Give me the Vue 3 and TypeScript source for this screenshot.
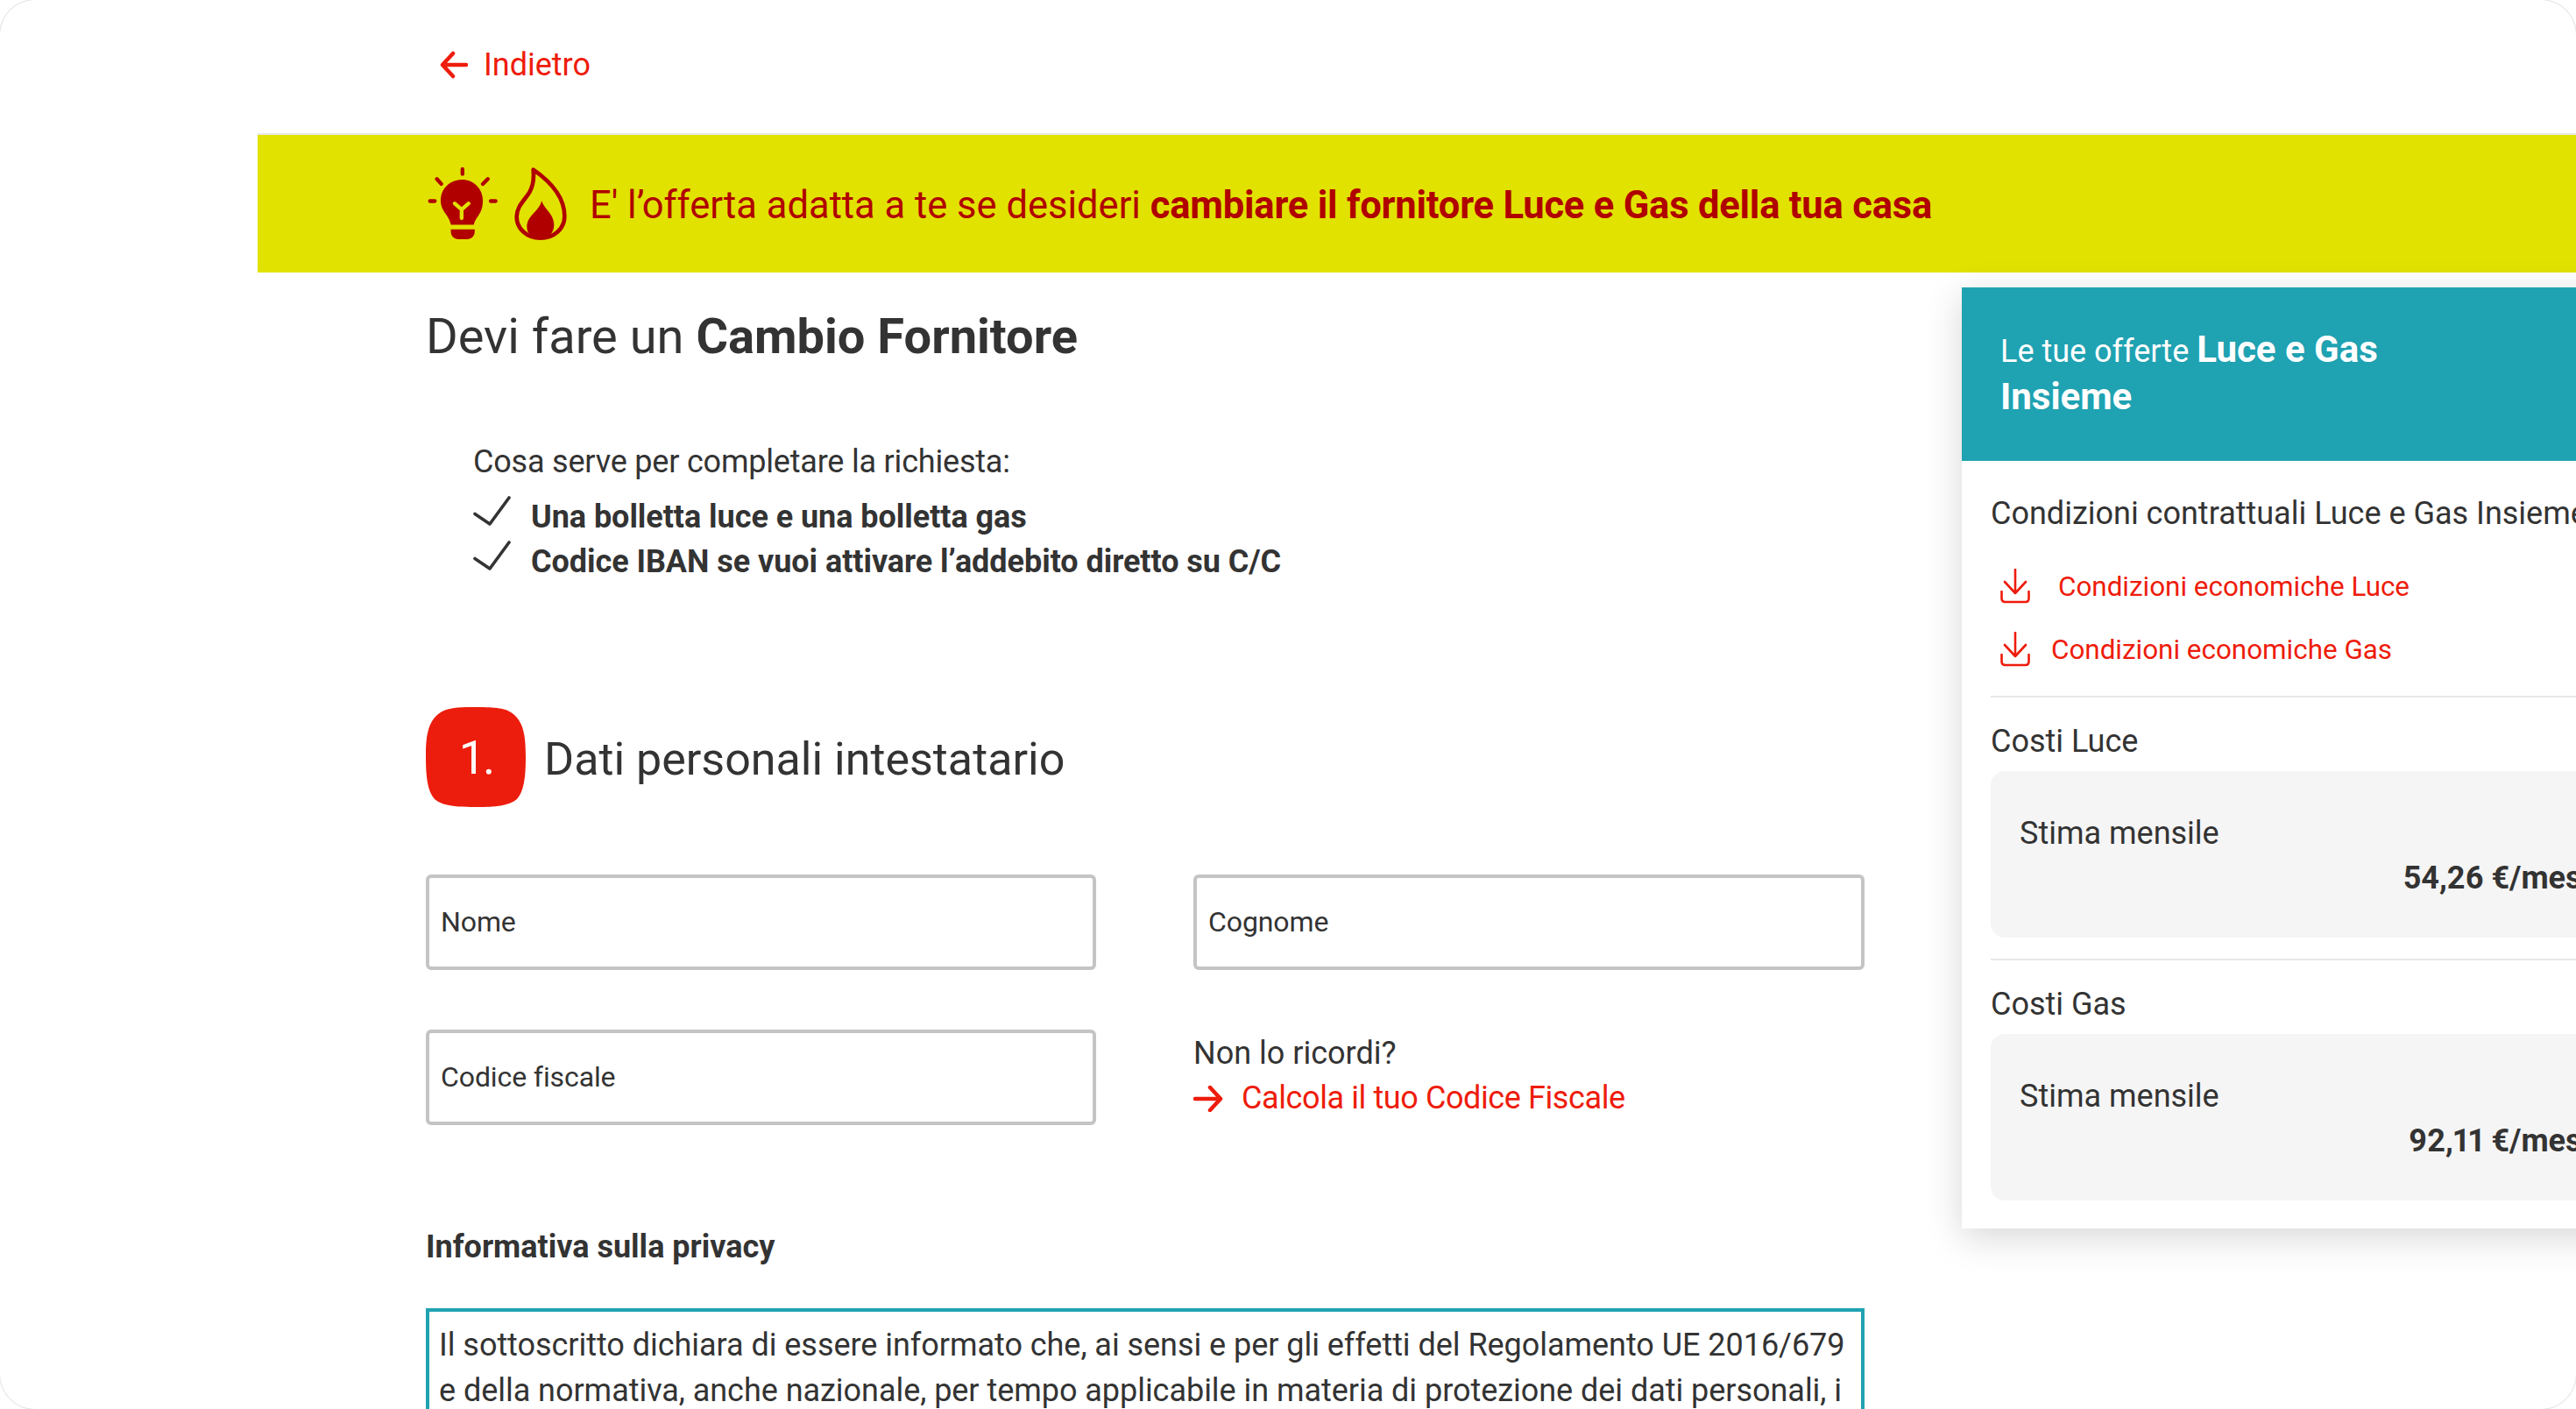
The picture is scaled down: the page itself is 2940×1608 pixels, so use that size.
<script setup lang="ts">
interface CostBlock {
  title: string
  price: string
}

const requirements: string[] = [
  'Una bolletta luce e una bolletta gas',
  "Codice IBAN se vuoi attivare l’addebito diretto su C/C"
]

const privacyLines: string[] = [
  'Il sottoscritto dichiara di essere informato che, ai sensi e per gli effetti del Regolamento UE 2016/679',
  'e della normativa, anche nazionale, per tempo applicabile in materia di protezione dei dati personali, i'
]

const costs: CostBlock[] = [
  { title: 'Costi Luce', price: '54,26 €/mese' },
  { title: 'Costi Gas', price: '92,11 €/mese' }
]
</script>

<template>
  <div class="page">
    <nav class="topbar">
      <a class="back-link">
        <svg class="back-icon" viewBox="0 0 32 32" fill="none" stroke="currentColor" stroke-width="4.5" stroke-linecap="round" stroke-linejoin="round">
          <path d="M30 16H3M15 3 3 16l12 13" />
        </svg>
        Indietro
      </a>
    </nav>

    <div class="content">
      <div class="banner">
        <svg class="bulb" viewBox="50 60 250 260">
          <g stroke="#b00000" stroke-width="13" stroke-linecap="round">
            <path d="M173 71v17M85 105l15 17M260 105l-17 17M61 181h17M270 181h17" />
          </g>
          <path fill="#b00000" d="M171 107c-41 0-73 32-73 72 0 24 12 39 22 53 6 9 11 19 13 30h79c2-11 8-21 15-30 10-14 16-29 16-53 0-40-31-72-72-72zM133 278h82v8c0 15-11 26-26 26h-30c-15 0-26-11-26-26z" />
          <path fill="none" stroke="#e2e200" stroke-width="13" stroke-linecap="round" stroke-linejoin="round" d="m146 189 24 21 24-21M170 210v30" />
        </svg>
        <svg class="flame" viewBox="340 60 195 258">
          <path fill="none" stroke="#b00000" stroke-width="14" stroke-linejoin="round" d="M411 71c3 32 1 53-13 77-16 27-44 48-44 84 0 42 36 73 81 73 46 0 83-31 83-75 0-64-48-118-107-159z" />
          <path fill="#b00000" d="M440 177c6 28 42 44 42 83 0 30-22 45-47 45-27 0-46-10-46-40 0-38 41-49 51-88z" />
        </svg>
        <p class="banner-text">E' l’offerta adatta a te se desideri <b>cambiare il fornitore Luce e Gas della tua casa</b></p>
      </div>

      <div class="columns">
        <main class="main-col">
          <h1 class="title">Devi fare un <b>Cambio Fornitore</b></h1>

          <section class="needs">
            <p class="needs-intro">Cosa serve per completare la richiesta:</p>
            <ul class="needs-list">
              <li v-for="item in requirements" :key="item" class="needs-item">
                <svg class="check" viewBox="0 0 43 34" fill="none" stroke="#333" stroke-width="3.6" stroke-linecap="round" stroke-linejoin="round">
                  <path d="M2 20.500 19 32 41 2" />
                </svg>
                <span>{{ item }}</span>
              </li>
            </ul>
          </section>

          <div class="step-head">
            <div class="step-badge">1.</div>
            <h2 class="step-title">Dati personali intestatario</h2>
          </div>

          <div class="form-grid">
            <input class="field" type="text" placeholder="Nome" />
            <input class="field" type="text" placeholder="Cognome" />
            <input class="field" type="text" placeholder="Codice fiscale" />
            <div class="cf-help">
              <span>Non lo ricordi?</span>
              <a class="cf-link">
                <svg class="cf-arrow" viewBox="0 0 34 30" fill="none" stroke="currentColor" stroke-width="4.5" stroke-linecap="round" stroke-linejoin="round">
                  <path d="M2 15h29M19 2l12 13-12 13" />
                </svg>
                Calcola il tuo Codice Fiscale
              </a>
            </div>
          </div>

          <h3 class="privacy-title">Informativa sulla privacy</h3>
          <div class="privacy-box">
            <p v-for="line in privacyLines" :key="line" class="privacy-line">{{ line }}</p>
          </div>
        </main>

        <aside class="offer-panel">
          <header class="offer-head">Le tue offerte <b>Luce e Gas<br />Insieme</b></header>
          <div class="offer-body">
            <p class="offer-label">Condizioni contrattuali Luce e Gas Insieme</p>
            <a class="doc-link first">
              <svg class="doc-icon" viewBox="0 0 34 40" fill="none" stroke="currentColor" stroke-width="2.600" stroke-linecap="round" stroke-linejoin="round">
                <path d="M17 1v27M5 15l12 13 12-13M1.500 26v8q0 4 4 4h23q4 0 4-4v-8" />
              </svg>
              <span>Condizioni economiche Luce</span>
            </a>
            <a class="doc-link second">
              <svg class="doc-icon" viewBox="0 0 34 40" fill="none" stroke="currentColor" stroke-width="2.600" stroke-linecap="round" stroke-linejoin="round">
                <path d="M17 1v27M5 15l12 13 12-13M1.500 26v8q0 4 4 4h23q4 0 4-4v-8" />
              </svg>
              <span>Condizioni economiche Gas</span>
            </a>
            <section v-for="cost in costs" :key="cost.title" class="cost">
              <p class="cost-title">{{ cost.title }}</p>
              <div class="cost-card">
                <p class="cost-name">Stima mensile</p>
                <p class="cost-price">{{ cost.price }}</p>
              </div>
            </section>
          </div>
        </aside>
      </div>
    </div>
  </div>
</template>

<style>
html,
body {
  margin: 0;
  background: #fff;
}
</style>

<style scoped>
.page {
  width: 2940px;
  height: 1608px;
  overflow: hidden;
  background: #fff;
  border-radius: 40px;
  box-shadow: 0 0 0 1px #e4e4e4;
  font-family: Roboto, sans-serif;
  color: #333;
}

p,
h1,
h2,
h3,
ul {
  margin: 0;
  padding: 0;
  font-weight: 400;
}

b {
  font-weight: 700;
}

.topbar {
  height: 152px;
  padding-left: 502px;
  display: flex;
  align-items: center;
  box-sizing: border-box;
  padding-bottom: 4px;
}

.back-link {
  display: flex;
  align-items: center;
  gap: 18px;
  font-size: 36px;
  color: #ee1c0c;
}

.back-icon {
  width: 32px;
  height: 32px;
}

.content {
  margin-left: 294px;
  border-top: 2px solid #e8e8e8;
}

.banner {
  height: 157px;
  background: #e2e200;
  display: flex;
  align-items: center;
  padding-left: 193px;
  color: #b00000;
}

.bulb {
  width: 83px;
  height: 87px;
}

.flame {
  width: 65px;
  height: 86px;
  margin-left: 15px;
}

.banner-text {
  margin-left: 23px;
  padding-top: 4px;
  font-size: 43.5px;
  white-space: nowrap;
}

.banner-text b {
  letter-spacing: -0.2px;
}

.columns {
  display: flex;
  align-items: flex-start;
}

.main-col {
  width: 1642px;
  flex-shrink: 0;
  margin-left: 192px;
  padding-top: 40px;
}

.title {
  font-size: 56px;
  line-height: 66px;
}

.needs {
  margin-top: 90px;
  padding-left: 54px;
}

.needs-intro {
  font-size: 36px;
  line-height: 40px;
  letter-spacing: -0.2px;
}

.needs-list {
  margin-top: 18px;
  list-style: none;
}

.needs-item {
  display: flex;
  gap: 23px;
  font-size: 36px;
  line-height: 51px;
  font-weight: 700;
  letter-spacing: -0.05px;
}

.check {
  width: 43px;
  height: 34px;
  flex-shrink: 0;
  margin-top: 1px;
}

.step-head {
  margin-top: 140px;
  display: flex;
  align-items: center;
  gap: 21px;
}

.step-badge {
  width: 114px;
  height: 114px;
  display: flex;
  align-items: center;
  justify-content: center;
  background: #ec1d0d;
  color: #fff;
  font-size: 54px;
  letter-spacing: -3px;
  clip-path: path("M57 0C80 0 92 1 100 8 112 18 114 34 114 57 114 80 112 96 104 105 94 113 80 114 57 114 34 114 20 113 10 105 2 96 0 80 0 57 0 34 2 18 14 8 22 1 34 0 57 0Z");
}

.step-title {
  padding-top: 4px;
  font-size: 52px;
}

.form-grid {
  margin-top: 77px;
  display: grid;
  grid-template-columns: 765px 766px;
  column-gap: 111px;
  row-gap: 68px;
}

.field {
  height: 109px;
  box-sizing: border-box;
  border: 4px solid #c4c4c4;
  border-radius: 6px;
  padding: 0 13px 2px;
  font-family: inherit;
  font-size: 32px;
  letter-spacing: -0.1px;
  color: #333;
  outline: none;
}

.field::placeholder {
  color: #333;
  opacity: 1;
}

.cf-help {
  display: flex;
  flex-direction: column;
  padding-top: 2px;
  font-size: 36px;
  line-height: 51px;
}

.cf-link {
  display: flex;
  align-items: center;
  gap: 21px;
  color: #ee1c0c;
  letter-spacing: -0.4px;
}

.cf-arrow {
  width: 34px;
  height: 30px;
}

.privacy-title {
  margin-top: 117px;
  font-size: 36px;
  line-height: 44px;
  font-weight: 700;
}

.privacy-box {
  margin-top: 48px;
  border: 4px solid #1fa2b2;
  padding: 12px 11px;
  height: 400px;
}

.privacy-line {
  font-size: 36px;
  line-height: 52px;
  letter-spacing: -0.04px;
  white-space: nowrap;
}

.offer-panel {
  width: 793px;
  flex-shrink: 0;
  margin-left: 111px;
  margin-top: 17px;
  background: #fff;
  box-shadow: 0 10px 40px rgba(0, 0, 0, 0.16);
}

.offer-head {
  height: 198px;
  box-sizing: border-box;
  padding: 46px 44px 0;
  background: #1fa2b2;
  color: #fff;
  font-size: 36px;
  line-height: 54px;
}

.offer-head b {
  font-size: 42px;
  line-height: 1;
}

.offer-body {
  padding: 0 33px 32px;
}

.offer-label {
  margin-top: 40px;
  font-size: 36px;
  line-height: 40px;
  white-space: nowrap;
}

.doc-link {
  display: flex;
  align-items: center;
  color: #ee1c0c;
  font-size: 31.4px;
  padding-left: 11px;
}

.doc-link.first {
  margin-top: 43px;
  gap: 32px;
}

.doc-link.second {
  margin-top: 32px;
  gap: 24px;
}

.doc-icon {
  width: 34px;
  height: 40px;
  flex-shrink: 0;
}

.cost {
  border-top: 2px solid #e8e8e8;
  padding-top: 30px;
}

.doc-link + .cost {
  margin-top: 33px;
}

.cost + .cost {
  margin-top: 24px;
}

.cost-title {
  font-size: 36px;
  line-height: 40px;
}

.cost-card {
  margin-top: 14px;
  height: 190px;
  box-sizing: border-box;
  padding: 51px 33px 0;
  background: #f5f5f5;
  border-radius: 16px;
}

.cost-name {
  font-size: 36px;
  line-height: 40px;
}

.cost-price {
  margin-top: 11px;
  font-size: 36px;
  line-height: 40px;
  font-weight: 700;
  font-variant-numeric: proportional-nums;
  text-align: right;
}
</style>
